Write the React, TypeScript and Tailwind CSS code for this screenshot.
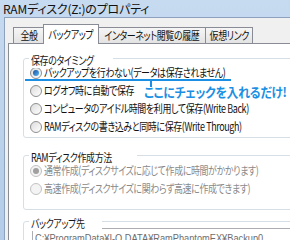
import React from "react";

const jp = "font-['Noto_Sans_CJK_JP',sans-serif] [font-feature-settings:'palt']";

// the dialog font is much narrower than Noto, so squeeze the text sideways
function Sq({ children, center }: { children: React.ReactNode; center?: boolean }) {
  return (
    <span
      className={`inline-block whitespace-nowrap text-[11.5px] tracking-[-0.5px] scale-x-[0.78] ${
        center ? "origin-center" : "origin-left"
      }`}
    >
      {children}
    </span>
  );
}

function Radio({ checked, disabled }: { checked?: boolean; disabled?: boolean }) {
  return (
    <span
      className={`flex h-[12px] w-[12px] shrink-0 items-center justify-center rounded-full border ${
        disabled ? "border-[#c2c2c2] bg-[#f4f4f4]" : "border-[#8e8f8f] bg-gradient-to-br from-[#dcdcdc] to-[#ffffff]"
      }`}
    >
      {checked && (
        <span
          className={`h-[6px] w-[6px] rounded-full ${
            disabled ? "bg-[#a0a0a0]" : "bg-gradient-to-br from-[#0f4f9e] to-[#5fb8f4]"
          }`}
        />
      )}
    </span>
  );
}

function Option({ label, checked, disabled }: { label: string; checked?: boolean; disabled?: boolean }) {
  return (
    <div className={`flex h-[18px] items-center gap-[2px] ${disabled ? "text-[#8a8a8a]" : "text-[#111]"}`}>
      <Radio checked={checked} disabled={disabled} />
      <Sq>{label}</Sq>
    </div>
  );
}

function Group({ title, children, className }: { title: string; children: React.ReactNode; className?: string }) {
  return (
    <div className={`relative mr-[-20px] rounded-[3px] border border-[#d5dfe5] pl-[6px] ${className ?? ""}`}>
      <span className="absolute left-[5px] top-[-9px] bg-white px-[2px] leading-[16px] text-[#151515]">
        <Sq>{title}</Sq>
      </span>
      {children}
    </div>
  );
}

export default function App() {
  const tabs = [
    { label: "全般", w: "w-[31px]" },
    { label: "バックアップ", w: "w-[56px]", active: true },
    { label: "インターネット閲覧の履歴", w: "w-[108px]" },
    { label: "仮想リンク", w: "w-[47px]" },
  ];
  return (
    <div className={`flex h-[240px] w-[290px] flex-col overflow-hidden bg-gradient-to-b from-[#c6daf0] to-[#b4cce8] ${jp}`}>
      <div className="flex h-[17px] shrink-0 items-center pl-[3px] text-[12px] tracking-[-0.2px] text-[#111]">
        RAMディスク(Z:)のプロパティ
      </div>
      <div className="ml-[4px] flex flex-1 flex-col border-l border-t border-[#8da2bd] bg-[#f0f0f0] pt-[6px]">
        <div className="flex h-[19px] items-end pl-[8px]">
          {tabs.map((t) =>
            t.active ? (
              <div
                key={t.label}
                className={`${t.w} relative z-10 -mx-[1px] mb-[-1px] flex h-[20px] shrink-0 items-center justify-center overflow-hidden border border-b-0 border-[#898c95] bg-white text-[#111]`}
              >
                <Sq center>{t.label}</Sq>
              </div>
            ) : (
              <div
                key={t.label}
                className={`${t.w} flex h-[16px] shrink-0 items-center justify-center overflow-hidden border border-b-0 border-l-0 border-[#898c95] bg-gradient-to-b from-[#f6f6f6] to-[#e3e3e3] text-[#111] first:border-l`}
              >
                <Sq center>{t.label}</Sq>
              </div>
            )
          )}
        </div>
        <div className="relative ml-[3px] flex flex-1 flex-col border-l border-t border-[#898c95] bg-white pl-[14px] pt-[14px]">
          <Group title="保存のタイミング" className="h-[80px] pt-[5px]">
            <Option label="バックアップを行わない(データは保存されません)" checked />
            <Option label="ログオフ時に自動で保存" />
            <Option label="コンピュータのアイドル時間を利用して保存(Write Back)" />
            <Option label="RAMディスクの書き込みと同時に保存(Write Through)" />
          </Group>
          <Group title="RAMディスク作成方法" className="mt-[17px] h-[55px] pt-[6px]">
            <Option label="通常作成(ディスクサイズに応じて作成に時間がかかります)" checked disabled />
            <Option label="高速作成(ディスクサイズに関わらず高速に作成できます)" disabled />
          </Group>
          <Group title="バックアップ先" className="mt-[11px] h-[40px] pt-[6px]">
            <div className="ml-[2px] flex h-[20px] items-center overflow-hidden border border-[#abadb3] bg-white pl-[2px] text-[#6d6d6d]">
              <span className="inline-block origin-left scale-x-[0.84] whitespace-nowrap font-['Liberation_Sans',sans-serif] text-[11px]">
                C:¥ProgramData¥I-O DATA¥RamPhantomEX¥Backup0
              </span>
            </div>
          </Group>
          {/* annotation */}
          <div className="absolute left-[16px] top-[35px] h-[2px] w-[206px] bg-[#1b8fe3]" />
          <div className="absolute left-[141px] top-[36px] h-[7px] w-[2px] bg-[#1b8fe3]" />
          <div className="absolute left-[135px] top-[41px] whitespace-nowrap text-[13px] font-bold leading-[14px] tracking-[-0.3px] text-[#1b8fe3]">
            <span className="inline-block origin-left scale-x-[0.91]">ここにチェックを入れるだけ!</span>
          </div>
        </div>
      </div>
    </div>
  );
}
